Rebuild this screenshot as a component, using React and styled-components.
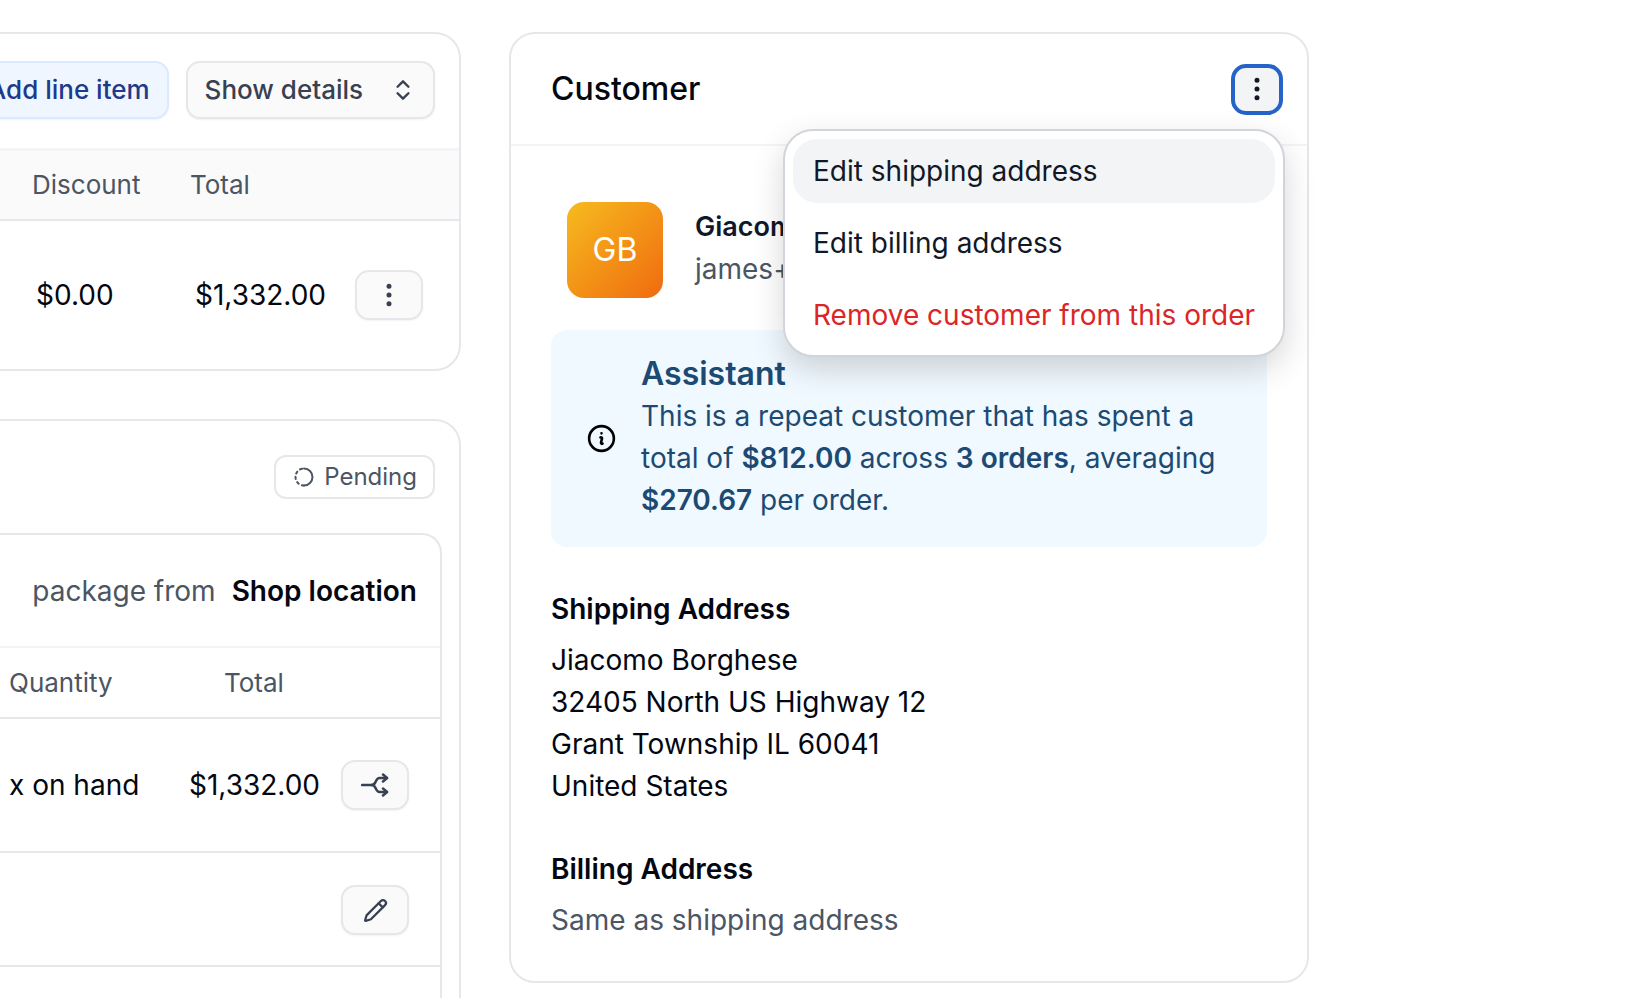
import React from 'react';
import styled, { createGlobalStyle } from 'styled-components';
import { ChevronsUpDown, EllipsisVertical, Pencil } from 'lucide-react';

const GlobalStyle = createGlobalStyle`
  html, body {
    margin: 0;
    background: #fff;
    font-family: Inter, "Liberation Sans", sans-serif;
    color: #030712;
  }
`;

const Page = styled.div`
  display: flex;
  align-items: flex-start;
  gap: 48px;
  width: 1632px;
  height: 998px;
  padding-top: 32px;
  box-sizing: border-box;
  overflow: hidden;
  font-size: 28px;
  line-height: 42px;
`;

const LeftColumn = styled.div`
  display: flex;
  flex-direction: column;
  gap: 48px;
  width: 461px;
  flex: none;
`;

const OpenCard = styled.section`
  border: 2px solid #e5e7eb;
  border-left: none;
  border-radius: 0 26px 26px 0;
  background: #fff;
  overflow: hidden;
  ${(p) => p.$bleed && 'height: 700px; border-bottom: none;'}
`;

const Toolbar = styled.div`
  display: flex;
  justify-content: flex-end;
  gap: 17px;
  padding: 27px 24px 29px 0;
`;

const ToolButton = styled.div`
  display: flex;
  align-items: center;
  flex: none;
  height: 58px;
  box-sizing: border-box;
  padding: 0 17px;
  border: 2px solid ${(p) => (p.$accent ? '#dbeafe' : '#e5e7eb')};
  border-radius: 14px;
  background: ${(p) => (p.$accent ? '#eff6ff' : '#fafafa')};
  color: ${(p) => (p.$accent ? '#1e3a8a' : '#374151')};
  font-size: 26px;
  font-weight: 500;
  box-shadow: 0 1px 2px rgba(0, 0, 0, 0.05);
  svg { margin-left: 27px; }
`;

const HeadRow = styled.div`
  display: grid;
  grid-template-columns: 158px auto;
  align-items: center;
  height: 68px;
  padding-left: 32px;
  background: #fafafa;
  border-top: 3px solid #f3f4f6;
  border-bottom: 2px solid #e5e7eb;
  color: #4b5563;
  font-size: 26px;
`;

const LineRow = styled.div`
  display: grid;
  grid-template-columns: 159px 160px 68px;
  align-items: center;
  height: 148px;
  padding-left: 36px;
`;

const IconButton = styled.div`
  display: flex;
  align-items: center;
  justify-content: center;
  width: 68px;
  height: 50px;
  box-sizing: border-box;
  border: 2px solid #e5e7eb;
  border-radius: 14px;
  background: #fafafa;
  color: #374151;
  box-shadow: 0 1px 2px rgba(0, 0, 0, 0.05);
`;

const BadgeRow = styled.div`
  display: flex;
  justify-content: flex-end;
  padding: 34px 24px 34px 0;
`;

const Badge = styled.div`
  display: flex;
  align-items: center;
  gap: 8px;
  height: 44px;
  box-sizing: border-box;
  padding: 0 16px;
  border: 2px solid #e5e7eb;
  border-radius: 12px;
  color: #4b5563;
  font-size: 24px;
`;

const InnerCard = styled.div`
  width: 442px;
  border: 2px solid #e5e7eb;
  border-left: none;
  border-bottom: none;
  border-radius: 0 20px 0 0;
  box-sizing: border-box;
`;

const PackageRow = styled.div`
  display: flex;
  justify-content: flex-end;
  align-items: center;
  gap: 16px;
  height: 111px;
  padding-right: 23px;
  color: #4b5563;
  b { color: #030712; font-weight: 600; }
`;

const FulfilHead = styled.div`
  display: grid;
  grid-template-columns: 215px auto;
  align-items: center;
  height: 69px;
  padding-left: 9px;
  border-top: 2px solid #f3f4f6;
  border-bottom: 2px solid #e5e7eb;
  color: #4b5563;
  font-size: 26px;
`;

const FulfilRow = styled.div`
  display: grid;
  grid-template-columns: 180px 152px 68px;
  align-items: center;
  height: 132px;
  padding-left: 9px;
  border-bottom: 2px solid #e5e7eb;
`;

const ActionRow = styled.div`
  display: flex;
  justify-content: flex-end;
  height: 114px;
  padding: 32px 31px 0 0;
  box-sizing: border-box;
  border-bottom: 2px solid #e5e7eb;
`;

const CustomerCard = styled.section`
  position: relative;
  flex: none;
  width: 800px;
  box-sizing: border-box;
  border: 2px solid #e5e7eb;
  border-radius: 26px;
  background: #fff;
`;

const CardHeader = styled.header`
  display: flex;
  align-items: center;
  justify-content: space-between;
  height: 112px;
  padding: 0 24px 0 40px;
  box-sizing: border-box;
  border-bottom: 2px solid #f3f4f6;
`;

const CardTitle = styled.h2`
  margin: 0;
  font-size: 32px;
  font-weight: 500;
`;

const FocusedButton = styled.div`
  display: flex;
  align-items: center;
  justify-content: center;
  width: 52px;
  height: 51px;
  box-sizing: border-box;
  border: 4px solid #2563c9;
  border-radius: 15px;
  background: #f3f4f6;
  color: #111827;
`;

const Menu = styled.div`
  position: absolute;
  top: 95px;
  right: 22px;
  z-index: 5;
  display: flex;
  flex-direction: column;
  gap: 8px;
  width: 502px;
  box-sizing: border-box;
  padding: 8px;
  border: 2px solid #d1d5db;
  border-radius: 30px;
  background: #fff;
  box-shadow: 0 12px 32px rgba(0, 0, 0, 0.16);
`;

const MenuItem = styled.div`
  display: flex;
  align-items: center;
  height: 64px;
  padding-left: 20px;
  border-radius: 24px;
  white-space: nowrap;
  background: ${(p) => (p.$active ? '#f3f4f6' : 'transparent')};
  color: ${(p) => (p.$danger ? '#dc2626' : '#111827')};
`;

const CardBody = styled.div`
  display: flex;
  flex-direction: column;
  gap: 41px;
  padding: 56px 40px 40px;
`;

const Person = styled.div`
  display: flex;
  align-items: center;
  gap: 32px;
  padding-left: 16px;
  margin-bottom: -9px;
  white-space: nowrap;
`;

const PersonText = styled.div`
  margin-bottom: 4px;
`;

const Avatar = styled.div`
  display: flex;
  align-items: center;
  justify-content: center;
  width: 96px;
  height: 96px;
  border-radius: 17px;
  background: linear-gradient(135deg, #f6bb1e, #f06b10);
  color: #fff;
  font-size: 32px;
`;

const PersonName = styled.div`
  font-size: 27px;
  font-weight: 600;
  color: #111827;
`;

const Muted = styled.div`
  color: #4b5563;
`;

const AssistantBox = styled.div`
  display: flex;
  align-items: center;
  gap: 23px;
  height: 217px;
  box-sizing: border-box;
  padding: 0 34px;
  border-radius: 16px;
  background: #f0f9ff;
  color: #1c4a72;
  b { font-weight: 600; }
`;

const AssistantText = styled.div`
  margin-bottom: 3px;
`;

const AssistantTitle = styled.div`
  font-size: 32px;
  font-weight: 600;
`;

const AddressBlock = styled.div`
  display: flex;
  flex-direction: column;
  gap: 9px;
`;

const AddressTitle = styled.div`
  font-weight: 600;
`;

const InfoIcon = () => (
  <svg width="33" height="33" viewBox="0 0 24 24" fill="none" stroke="#000" strokeWidth="1.9" strokeLinecap="round" strokeLinejoin="round" style={{ flex: 'none' }}>
    <path d="m11.25 11.25.041-.02a.75.75 0 0 1 1.063.852l-.708 2.836a.75.75 0 0 0 1.063.853l.041-.021M21 12a9 9 0 1 1-18 0 9 9 0 0 1 18 0Zm-9-3.75h.008v.008H12V8.25Z" />
  </svg>
);

const PendingIcon = () => (
  <svg width="24" height="24" viewBox="0 0 24 24" fill="none" stroke="#4b5563" strokeWidth="2" strokeLinecap="round">
    <path d="M12 3.5a8.5 8.5 0 0 1 0 17" />
    <path d="M12 20.5a8.5 8.5 0 0 1 0-17" strokeDasharray="2.2 3.4" />
  </svg>
);

const SplitIcon = () => (
  <svg width="28" height="24" viewBox="0 0 28 24" fill="none" stroke="#374151" strokeWidth="2.5" strokeLinecap="round" strokeLinejoin="round">
    <path d="M1 12h10" />
    <path d="M11 12c2.5 0 3-2 4-4 .8-1.6 1.6-3 3.5-3H26" />
    <path d="M11 12c2.5 0 3 2 4 4 .8 1.6 1.6 3 3.5 3H26" />
    <path d="m22 1.5 4 3.5-4 3.5" />
    <path d="m22 15.5 4 3.5-4 3.5" />
  </svg>
);

export default function App() {
  return (
    <>
      <GlobalStyle />
      <Page>
        <LeftColumn>
          <OpenCard>
            <Toolbar>
              <ToolButton $accent>Add line item</ToolButton>
              <ToolButton>
                Show details
                <ChevronsUpDown size={26} strokeWidth={2.2} />
              </ToolButton>
            </Toolbar>
            <HeadRow>
              <span>Discount</span>
              <span>Total</span>
            </HeadRow>
            <LineRow>
              <span>$0.00</span>
              <span>$1,332.00</span>
              <IconButton><EllipsisVertical size={30} /></IconButton>
            </LineRow>
          </OpenCard>

          <OpenCard $bleed>
            <BadgeRow>
              <Badge><PendingIcon />Pending</Badge>
            </BadgeRow>
            <InnerCard>
              <PackageRow>
                <span>package from</span>
                <b>Shop location</b>
              </PackageRow>
              <FulfilHead>
                <span>Quantity</span>
                <span>Total</span>
              </FulfilHead>
              <FulfilRow>
                <span>x on hand</span>
                <span>$1,332.00</span>
                <IconButton><SplitIcon /></IconButton>
              </FulfilRow>
              <ActionRow>
                <IconButton><Pencil size={25} strokeWidth={2.2} /></IconButton>
              </ActionRow>
              <ActionRow>
                <IconButton />
              </ActionRow>
            </InnerCard>
          </OpenCard>
        </LeftColumn>

        <CustomerCard>
          <CardHeader>
            <CardTitle>Customer</CardTitle>
            <FocusedButton><EllipsisVertical size={30} /></FocusedButton>
          </CardHeader>
          <Menu>
            <MenuItem $active>Edit shipping address</MenuItem>
            <MenuItem>Edit billing address</MenuItem>
            <MenuItem $danger>Remove customer from this order</MenuItem>
          </Menu>
          <CardBody>
            <Person>
              <Avatar>GB</Avatar>
              <PersonText>
                <PersonName>Giacomo Borghese</PersonName>
                <Muted>james+giacomo@example.com</Muted>
              </PersonText>
            </Person>
            <AssistantBox>
              <InfoIcon />
              <AssistantText>
                <AssistantTitle>Assistant</AssistantTitle>
                <div>
                  This is a repeat customer that has spent a total of <b>$812.00</b> across <b>3 orders</b>, averaging <b>$270.67</b> per order.
                </div>
              </AssistantText>
            </AssistantBox>
            <AddressBlock>
              <AddressTitle>Shipping Address</AddressTitle>
              <div>
                Jiacomo Borghese<br />
                32405 North US Highway 12<br />
                Grant Township IL 60041<br />
                United States
              </div>
            </AddressBlock>
            <AddressBlock>
              <AddressTitle>Billing Address</AddressTitle>
              <Muted>Same as shipping address</Muted>
            </AddressBlock>
          </CardBody>
        </CustomerCard>
      </Page>
    </>
  );
}
